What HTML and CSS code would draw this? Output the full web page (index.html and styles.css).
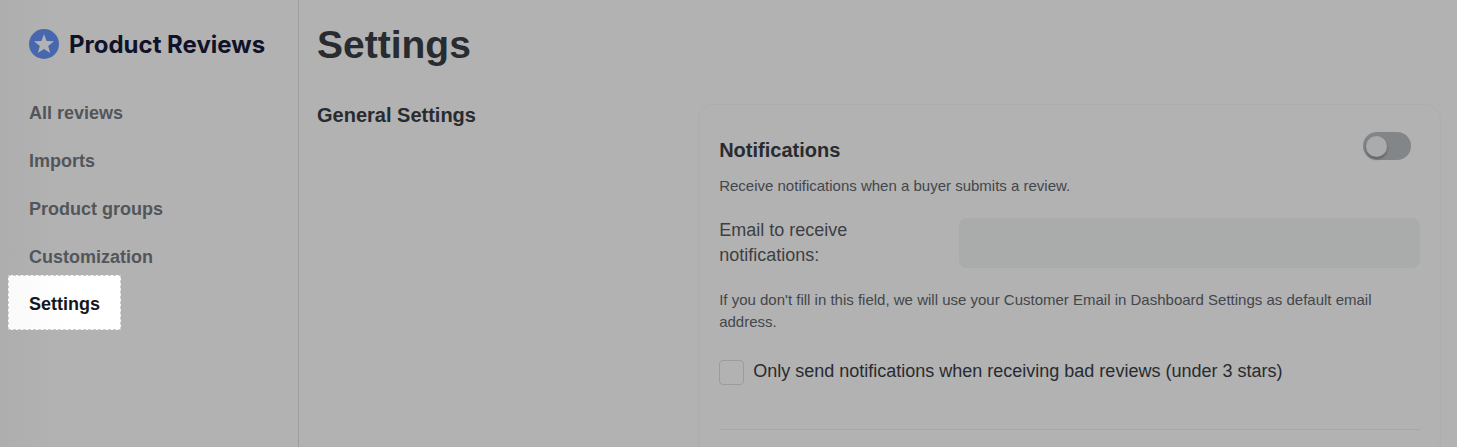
FILE: index.html
```html
<!DOCTYPE html>
<html lang="en">
    <head>
        <meta charset="utf-8">
        <title>Product Reviews - Settings</title>
        <link rel="stylesheet" href="styles.css">
    </head>

    <body>
        <div class="page">
          <aside class="sidebar">
            <a class="logo" href="#">
              <svg width="30" height="30" viewBox="0 0 30 30" aria-hidden="true">
                <circle cx="15" cy="15" r="15" fill="#4767ae"/>
                <path d="M15 5 L17.6 11.9 L25 12.2 L19.2 16.9 L21.2 24 L15 20 L8.8 24 L10.8 16.9 L5 12.2 L12.4 11.9 Z" fill="#b2b2b2"/>
              </svg>
              <span>Product Reviews</span>
            </a>
            <nav class="menu">
              <a href="#">All reviews</a>
              <a href="#">Imports</a>
              <a href="#">Product groups</a>
              <a href="#">Customization</a>
              <a class="active" href="#">Settings</a>
            </nav>
          </aside>

          <main class="content">
            <h1>Settings</h1>
            <div class="section">
              <h2>General Settings</h2>
              <form class="card">
                <div class="card-head">
                  <h2><label for="notifications">Notifications</label></h2>
                  <input type="checkbox" class="toggle" id="notifications" name="notifications">
                </div>
                <p class="hint">Receive notifications when a buyer submits a review.</p>
                <div class="field">
                  <label for="email">Email to receive notifications:</label>
                  <input type="email" id="email" name="email">
                </div>
                <p class="hint">If you don't fill in this field, we will use your Customer Email in Dashboard Settings as default email address.</p>
                <div class="check">
                  <input type="checkbox" id="badonly" name="badonly">
                  <label for="badonly">Only send notifications when receiving bad reviews (under 3 stars)</label>
                </div>
                <hr>
              </form>
            </div>
          </main>
        </div>
    </body>
</html>
```

FILE: styles.css
```css
* {
  box-sizing: border-box;
}

body {
  margin: 0;
  background: #b2b2b2;
  color: #282b30;
  font-family: "Liberation Sans", Arial, Helvetica, sans-serif;
  font-size: 18px;
  line-height: 25px;
}

.page {
  display: flex;
  min-height: 100vh;
}

/* sidebar */
.sidebar {
  flex: none;
  width: 299px;
  padding: 29px 20px 0 29px;
  border-right: 1px solid #9c9c9c;
  background: linear-gradient(to right, #aeaeae, #b2b2b2 60px);
}

.logo {
  display: flex;
  align-items: center;
  gap: 10px;
  height: 30px;
  color: #10122a;
  font-family: Inter, sans-serif;
  font-size: 24px;
  font-weight: 700;
  text-decoration: none;
  white-space: nowrap;
}

.menu {
  display: flex;
  flex-direction: column;
  align-items: flex-start;
  margin-top: 30px;
}

.menu a {
  padding: 14px 0;
  color: #52565a;
  font-weight: bold;
  line-height: 20px;
  text-decoration: none;
}

.menu a.active {
  margin: -6px 0 0 -21px;
  padding: 18px 20px 15px;
  border: 1px dashed #ccc;
  background: linear-gradient(to right, #fafafa, #fff 60px);
  color: #15171d;
}

/* settings */
.content {
  flex: 1;
  padding: 21px 16px 0 18px;
}

h1,
h2,
p {
  margin: 0;
}

h1 {
  font-size: 39px;
  line-height: 48px;
}

h2 {
  font-size: 20px;
  line-height: 24px;
}

.section {
  display: grid;
  grid-template-columns: 1fr 66%;
  margin-top: 35px;
}

.section > h2 {
  margin-top: -1px;
}

.card {
  margin-left: -1px;
  padding: 27px 20px;
  border: 1px solid #adadad;
  border-radius: 16px;
}

.card-head {
  display: flex;
  justify-content: space-between;
  align-items: flex-start;
  padding-right: 9px;
}

.card-head h2 {
  margin-top: 6px;
}

.hint {
  color: #43464b;
  font-size: 15px;
  line-height: 22px;
}

.card-head + .hint {
  margin-top: 13px;
}

.toggle {
  flex: none;
  appearance: none;
  width: 48px;
  height: 28px;
  margin: 0;
  padding: 4px 3px;
  border-radius: 14px;
  background: #828688;
}

.toggle::before {
  content: "";
  display: block;
  width: 21px;
  height: 21px;
  border-radius: 50%;
  background: #a9abac;
  box-shadow: 0 2px 3px rgba(0, 0, 0, 0.3);
}

.toggle:checked::before {
  margin-left: auto;
}

.field {
  display: grid;
  grid-template-columns: 30% 1fr;
  gap: 30px;
  margin: 21px 0;
  color: #3c3f44;
}

.field input {
  width: 100%;
  height: 50px;
  padding: 0 16px;
  border: 0;
  border-radius: 8px;
  background: #a9acaa;
  font: inherit;
}

.check {
  display: flex;
  gap: 9px;
  margin-top: 26px;
}

.check input {
  flex: none;
  appearance: none;
  width: 25px;
  height: 25px;
  margin: 1px 0 0;
  border: 1px solid #9b9c9d;
  border-radius: 4px;
}

.check input:checked {
  background: #4767ae;
}

hr {
  margin: 44px 0 0;
  border: 0;
  border-top: 1px solid #a6a7a7;
}
```
